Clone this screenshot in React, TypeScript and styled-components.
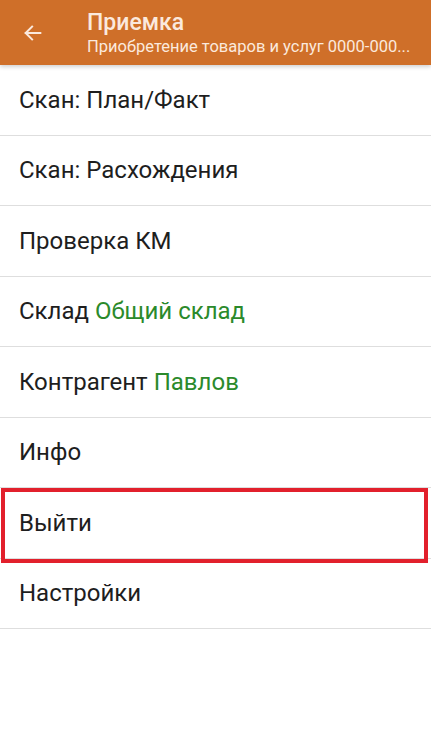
import React from "react";
import styled, { createGlobalStyle } from "styled-components";

const GlobalStyle = createGlobalStyle`
  html, body {
    margin: 0;
    padding: 0;
    background: #fff;
    font-family: Roboto, "Noto Sans", sans-serif;
  }
`;

const Screen = styled.div`
  width: 431px;
  height: 739px;
  background: #fff;
  overflow: hidden;
`;

const Header = styled.header`
  display: flex;
  align-items: center;
  height: 65px;
  background: #cf6f29;
  box-shadow: 0 2px 4px rgba(0, 0, 0, 0.18);
  position: relative;
  z-index: 1;
`;

const BackButton = styled.div`
  width: 66px;
  display: flex;
  justify-content: center;
  align-items: center;
  color: #fbe9dd;
`;

const Titles = styled.div`
  display: flex;
  flex-direction: column;
  min-width: 0;
  flex: 1;
  padding-right: 10px;
  margin-left: 21px;
`;

const Title = styled.div`
  font-size: 23px;
  font-weight: 500;
  color: #fbe9dd;
  line-height: 27px;
`;

const Subtitle = styled.div`
  font-size: 16.5px;
  color: #fbe9dd;
  line-height: 21px;
  white-space: nowrap;
  overflow: hidden;
  text-overflow: ellipsis;
`;

const List = styled.div`
  display: flex;
  flex-direction: column;
`;

const Row = styled.div<{ highlighted?: boolean }>`
  position: relative;
  height: 69.5px;
  display: flex;
  align-items: center;
  padding-left: 19px;
  border-bottom: 1px solid #dedede;
  font-size: 24px;
  color: #1e1e1e;

  ${(p) =>
    p.highlighted &&
    `
    &::after {
      content: "";
      position: absolute;
      top: 0;
      bottom: -5px;
      left: 1px;
      right: 3px;
      border: 4.5px solid #e2202c;
      pointer-events: none;
    }
  `}
`;

const Value = styled.span`
  color: #2b8a2b;
  margin-left: 6px;
`;

const items: { label: string; value?: string; highlighted?: boolean }[] = [
  { label: "Скан: План/Факт" },
  { label: "Скан: Расхождения" },
  { label: "Проверка КМ" },
  { label: "Склад", value: "Общий склад" },
  { label: "Контрагент", value: "Павлов" },
  { label: "Инфо" },
  { label: "Выйти", highlighted: true },
  { label: "Настройки" },
];

export default function App() {
  return (
    <Screen>
      <GlobalStyle />
      <Header>
        <BackButton>
          <svg width="22" height="22" viewBox="0 0 24 24" fill="none">
            <path
              d="M20 12H4M11 5l-7 7 7 7"
              stroke="currentColor"
              strokeWidth="2.2"
              strokeLinecap="square"
            />
          </svg>
        </BackButton>
        <Titles>
          <Title>Приемка</Title>
          <Subtitle>Приобретение товаров и услуг 0000-000...</Subtitle>
        </Titles>
      </Header>
      <List>
        {items.map((it) => (
          <Row key={it.label} highlighted={it.highlighted}>
            {it.label}
            {it.value && <Value>{it.value}</Value>}
          </Row>
        ))}
      </List>
    </Screen>
  );
}
